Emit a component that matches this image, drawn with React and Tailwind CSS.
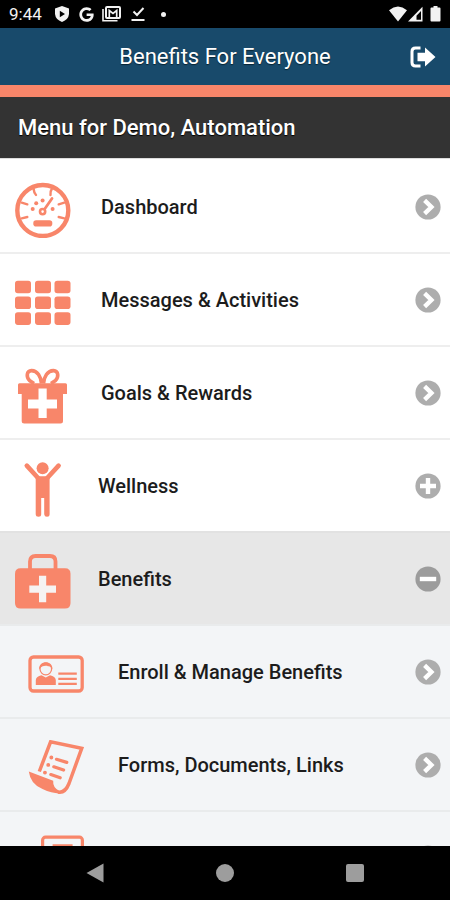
import React, { useState } from "react";
import { FaGoogle } from "react-icons/fa";

const GaugeIcon = () => (
  <svg viewBox="0 0 56 56" className="size-14" fill="none" stroke="currentColor">
    <circle cx="27.8" cy="28.5" r="25.5" strokeWidth="4.4" />
    <g strokeWidth="2.4" strokeLinecap="round">
      <path d="M18.5 6.5Q19 11 21 13M37 6.5Q35 9.5 35.5 13M6.7 20.7L12.3 22.3M49.3 20.7L43.7 22.3M6.7 36.3L12.3 35M49.3 36.3L43.7 35" />
      <path d="M30 26.5L37 16.5" strokeWidth="2.8" />
    </g>
    <circle cx="27.6" cy="29.6" r="2.6" strokeWidth="2.6" />
    <g fill="currentColor" stroke="none">
      <circle cx="17.7" cy="27" r="2" />
      <circle cx="21.2" cy="21.2" r="2" />
      <circle cx="27.6" cy="18.6" r="2" />
      <circle cx="37.6" cy="27" r="2" />
      <rect x="18.3" y="38.3" width="19" height="6.2" rx="2.8" />
    </g>
  </svg>
);

const GridIcon = () => (
  <svg viewBox="0 0 56 56" className="size-14" fill="currentColor">
    {[5.7, 21.5, 37.3].map((y) =>
      [0, 20, 39.5].map((x) => (
        <rect key={`${x}-${y}`} x={x} y={y} width="16" height="12.6" rx="2.8" />
      ))
    )}
  </svg>
);

const GiftIcon = () => (
  <svg viewBox="0 0 56 56" className="size-14">
    <path
      d="M26.5 15.5C26 9 22.5 2.5 16.5 2.6C11.5 2.8 11 9 14.5 12.5L19 15.5M28.5 15.5C29 9 32.5 2.5 38.5 2.6C43.5 2.8 44 9 40.5 12.5L36 15.5"
      fill="none"
      stroke="currentColor"
      strokeWidth="3.6"
    />
    <path
      fill="currentColor"
      fillRule="evenodd"
      d="M4.5 15.2H50.5Q52 15.2 52 16.7V26H48V53Q48 55.5 45.5 55.5H9.2Q6.7 55.5 6.7 53V26H3V16.7Q3 15.2 4.5 15.2ZM23.5 20.5V31.5H13V40.5H23.5V50H31.7V40.5H42V31.5H31.7V20.5Z"
    />
  </svg>
);

const PersonIcon = () => (
  <svg viewBox="0 0 56 56" className="size-14" fill="currentColor">
    <circle cx="27.6" cy="7.3" r="6" />
    <path
      d="M11.8 4.6L23.5 17.5M43.6 4.6L31.8 17.5"
      stroke="currentColor"
      strokeWidth="4.6"
      strokeLinecap="round"
    />
    <path d="M22 15.2H33.4L34.6 17V53.2Q34.6 55.7 32 55.7T29.2 53.2V37H26.2V53.2Q26.2 55.7 23.5 55.7T20.7 53.2V17Z" />
  </svg>
);

const MedicalBagIcon = () => (
  <svg viewBox="0 0 56 56" className="size-14">
    <path
      d="M15 15V7.5Q15 2 20.5 2H35Q40.5 2 40.5 7.5V15"
      fill="none"
      stroke="currentColor"
      strokeWidth="3.8"
    />
    <path
      fill="currentColor"
      fillRule="evenodd"
      d="M5.5 14.3H50Q55.5 14.3 55.5 19.8V49Q55.5 54.5 50 54.5H5.5Q0 54.5 0 49V19.8Q0 14.3 5.5 14.3Z"
    />
    <path d="M24 21.8H31.2V31.5H41V38.8H31.2V48.3H24V38.8H14.3V31.5H24Z" fill="#f6f3f2" />
  </svg>
);

const IdCardIcon = () => (
  <svg viewBox="0 0 56 56" className="size-14" fill="none" stroke="currentColor">
    <rect x="2" y="10" width="52.2" height="34" rx="3.5" strokeWidth="3.3" />
    <path d="M30.3 26.6H48.8M30.3 31.8H48.8M30.3 36.8H48.8" strokeWidth="2.3" />
    <circle cx="17.8" cy="22" r="5.8" strokeWidth="1.2" />
    <g fill="currentColor" stroke="none">
      <path d="M11.2 22.5C10.4 12.8 25.2 12.8 24.4 22.5C23.5 19 21.5 20 19 18.7C16 18.4 13 19 11.2 22.5Z" />
      <path d="M7.8 38V33Q8.2 29.5 13.5 28.3L17.8 30.5L22 28.3Q27.3 29.5 27.8 33V38Z" />
    </g>
  </svg>
);

const ScrollIcon = () => (
  <svg viewBox="0 0 56 56" className="size-14" fill="none" stroke="currentColor">
    <path d="M11.3 31.5L22.6 1.8L53.7 8.4L41 43.5Q37 53.5 30 52" strokeWidth="3.5" />
    <path
      d="M.8 31.6L25.2 40.8Q24.6 47.8 31.5 51V53.4Q24 53.5 14.5 49Q2.5 44.5 .8 31.6Z"
      fill="currentColor"
      stroke="none"
    />
    <g strokeWidth="3.2" strokeLinecap="round">
      <path d="M28.5 19.3L38.8 22.4M25.8 26.8L35.6 30M22.8 34.6L32.2 37.8" />
      <path d="M23.3 17.5h.1M20.2 24.9h.1M16.9 32.6h.1" strokeWidth="3.8" />
    </g>
  </svg>
);

const BookIcon = () => (
  <svg viewBox="0 0 56 56" className="size-14" fill="none" stroke="currentColor">
    <rect x="14.6" y="4.2" width="39.8" height="48" rx="3" strokeWidth="3.2" />
    <path d="M24.6 12.5H44.6M24.6 20.5H44.6M24.6 28.5H44.6" strokeWidth="2.6" />
  </svg>
);

const indicatorPaths = {
  arrow: "M9.6 6.4L16.4 13L9.6 19.6",
  plus: "M13 5V21M5 13H21",
  minus: "M4.8 13H21.2",
};

const Indicator = ({ type }) => (
  <svg
    viewBox="0 0 26 26"
    className={`size-[26px] shrink-0 ${type === "minus" ? "text-[#9c9c9c]" : "text-[#adadad]"}`}
  >
    <circle cx="13" cy="13" r="12.6" fill="currentColor" />
    <path d={indicatorPaths[type]} fill="none" stroke="white" strokeWidth="4.4" />
  </svg>
);

const mainItems = [
  { label: "Dashboard", icon: GaugeIcon },
  { label: "Messages & Activities", icon: GridIcon },
  { label: "Goals & Rewards", icon: GiftIcon },
];

const benefitItems = [
  { label: "Enroll & Manage Benefits", icon: IdCardIcon },
  { label: "Forms, Documents, Links", icon: ScrollIcon },
  { icon: BookIcon },
];

const rowClass =
  "flex h-[93px] w-full items-center border-t-2 pr-[9px] text-left text-xl font-medium text-[#1c1c1c]";

const RowContent = ({ icon: Icon, label, indicator }) => (
  <>
    <span className="mt-1.5 shrink-0 text-[#f8866a]">
      <Icon />
    </span>
    <span className="flex-1">{label}</span>
    <Indicator type={indicator} />
  </>
);

const StatusBar = () => (
  <div className="flex h-7 shrink-0 items-center justify-between bg-black px-[9px] text-[#f2f2f2]">
    <div className="flex items-center">
      <span className="w-[46px] text-[17px] leading-7">9:44</span>
      <svg viewBox="0 0 14 16" className="h-4 w-3.5">
        <path d="M7 0L14 2.6V8Q13.5 13.5 7 16Q.5 13.5 0 8V2.6Z" fill="currentColor" />
        <path d="M4.8 4.8L10 8L4.8 11.2Z" fill="black" />
      </svg>
      <FaGoogle className="ml-2.5 size-[15px]" />
      <svg viewBox="0 0 19 16" className="ml-2 h-4 w-[19px]" fill="none" stroke="currentColor">
        <path d="M1 3V14.8H15.5" strokeWidth="1.6" />
        <rect x="4" y="1" width="14" height="11" rx="1" strokeWidth="2" />
        <path d="M7.3 11V4.5L11 7.5L14.7 4.5V11" strokeWidth="1.7" />
      </svg>
      <svg viewBox="0 0 14 16" className="ml-2.5 h-4 w-3.5" fill="none" stroke="currentColor" strokeWidth="2">
        <path d="M2.5 5.5L6 9L12.5 2M.5 14H13.5" />
      </svg>
      <span className="ml-4 size-[5px] rounded-full bg-current" />
    </div>
    <div className="flex items-center">
      <svg viewBox="0 0 18 16" className="h-4 w-[18px]" fill="currentColor">
        <path d="M0 4.2Q9-3 18 4.2L9 15.5Z" />
      </svg>
      <svg viewBox="0 0 15 16" className="ml-px h-4 w-[15px]">
        <path d="M14.5 .8V15.5H0Z" fill="currentColor" />
        <path d="M13 5V13.8H8.5V9.7Z" fill="black" />
      </svg>
      <svg viewBox="0 0 11 16" className="ml-[7px] h-4 w-[11px]" fill="currentColor">
        <path d="M3.5 0H7.5V1.5H9.5Q10.5 1.5 10.5 2.5V14.5Q10.5 15.5 9.5 15.5H1.5Q.5 15.5 .5 14.5V2.5Q.5 1.5 1.5 1.5H3.5Z" />
      </svg>
    </div>
  </div>
);

const AppHeader = () => (
  <header className="grid h-[69px] shrink-0 grid-cols-[1fr_auto_1fr] items-center border-b-[12px] border-[#f8866a] bg-[#184a6b] px-3.5 text-white">
    <h1 className="col-start-2 text-[22px] leading-7 [text-shadow:0_1px_1px_#072333]">
      Benefits For Everyone
    </h1>
    <button aria-label="Sign out" className="justify-self-end">
      <svg viewBox="0 0 26 22" className="h-[22px] w-[26px]">
        <path
          d="M10.5 2H5.5Q2 2 2 5.5V16.5Q2 20 5.5 20H10.5"
          fill="none"
          stroke="currentColor"
          strokeWidth="3"
        />
        <path d="M7.5 6.8H15V1.5L25.5 11L15 20.5V15.2H7.5Z" fill="currentColor" />
      </svg>
    </button>
  </header>
);

const SystemNav = () => (
  <div className="grid h-[54px] shrink-0 grid-cols-3 place-items-center bg-black px-[30px] text-[#9d9d9d]">
    <button aria-label="Back">
      <svg viewBox="0 0 18 20" className="h-5 w-[18px]" fill="currentColor">
        <path d="M17.5 .5V19.5L.5 10Z" />
      </svg>
    </button>
    <button aria-label="Home" className="size-[18px] rounded-full bg-current" />
    <button aria-label="Recent apps" className="size-[18px] rounded-xs bg-current" />
  </div>
);

const App = () => {
  const [wellnessOpen, setWellnessOpen] = useState(false);
  const [benefitsOpen, setBenefitsOpen] = useState(true);

  return (
    <div className="flex h-screen w-full flex-col overflow-hidden bg-white font-[Roboto,sans-serif]">
      <StatusBar />
      <AppHeader />
      <h2 className="h-[61px] shrink-0 bg-[#333] px-[18px] text-[22px] font-medium leading-[62px] text-white [text-shadow:0_1px_1px_black]">
        Menu for Demo, Automation
      </h2>

      <nav className="min-h-0 flex-1 overflow-y-auto border-t border-[#ddd] [scrollbar-width:none]">
        {mainItems.map((item, index) => (
          <a
            key={item.label}
            href="#"
            className={`${rowClass} gap-[30px] pl-[15px] ${index === 0 ? "border-white" : "border-[#eee]"}`}
          >
            <RowContent {...item} indicator="arrow" />
          </a>
        ))}

        <button
          aria-expanded={wellnessOpen}
          onClick={() => setWellnessOpen(!wellnessOpen)}
          className={`${rowClass} gap-[27px] border-[#eee] pl-[15px]`}
        >
          <RowContent
            icon={PersonIcon}
            label="Wellness"
            indicator={wellnessOpen ? "minus" : "plus"}
          />
        </button>
        <button
          aria-expanded={benefitsOpen}
          onClick={() => setBenefitsOpen(!benefitsOpen)}
          className={`${rowClass} gap-[27px] border-[#e2e2e2] bg-[#e7e7e7] pl-[15px]`}
        >
          <RowContent
            icon={MedicalBagIcon}
            label="Benefits"
            indicator={benefitsOpen ? "minus" : "plus"}
          />
        </button>

        {benefitsOpen &&
          benefitItems.map((item, index) => (
            <a
              key={index}
              href="#"
              className={`${rowClass} gap-[34px] border-[#e9ebec] bg-[#f3f5f7] pl-7`}
            >
              <RowContent {...item} indicator="arrow" />
            </a>
          ))}
      </nav>

      <SystemNav />
    </div>
  );
};

export default App;
